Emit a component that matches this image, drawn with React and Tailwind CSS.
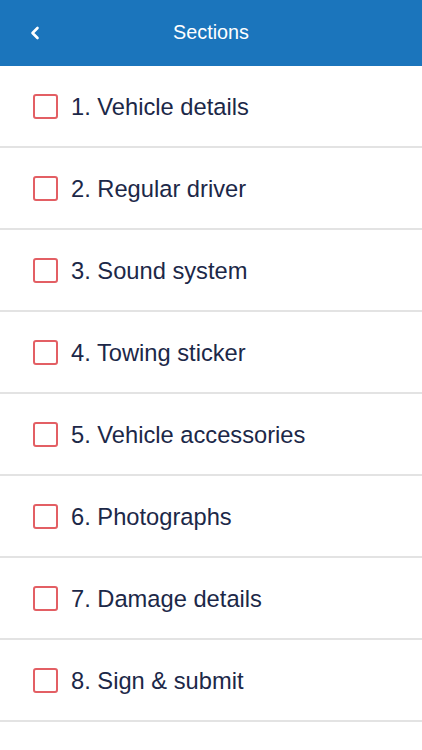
const sections = [
  '1. Vehicle details',
  '2. Regular driver',
  '3. Sound system',
  '4. Towing sticker',
  '5. Vehicle accessories',
  '6. Photographs',
  '7. Damage details',
  '8. Sign & submit',
];

export default function App() {
  return (
    <div className="min-h-[750px] bg-white font-['Liberation_Sans',Arial,sans-serif]">
      <header className="relative flex h-[66px] items-center justify-center bg-[#1b75bc]">
        <button className="absolute left-[28px] top-[24px] text-white">
          <svg width="14" height="18" viewBox="0 0 14 18" fill="none">
            <path d="M9.5 4 L4.5 9 L9.5 14" stroke="white" strokeWidth="2.6" strokeLinecap="round" strokeLinejoin="round" />
          </svg>
        </button>
        <h1 className="text-[19.8px] text-white">Sections</h1>
      </header>
      <ul>
        {sections.map((s) => (
          <li key={s} className="flex h-[82px] items-center gap-[13px] border-b-2 border-[#e3e3e3] pl-[33px]">
            <span className="h-[25px] w-[25px] shrink-0 rounded-[3px] border-[2.5px] border-[#e35f64]" />
            <span className="pt-[4px] text-[23.7px] text-[#1c2848]">{s}</span>
          </li>
        ))}
      </ul>
    </div>
  );
}
